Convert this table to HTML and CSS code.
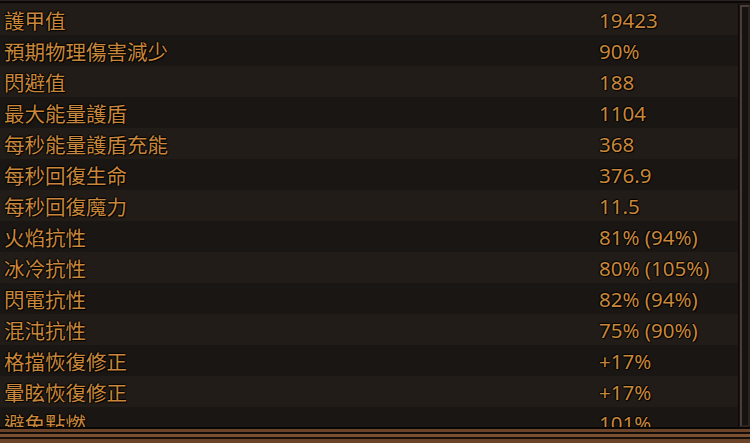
FILE: index.html
```html
<!DOCTYPE html>
<html lang="zh-Hant">
<head>
  <meta charset="UTF-8">
  <title>角色屬性</title>
  <link rel="stylesheet" href="styles.css">
</head>
<body>
  <div class="panel">
    <div class="top-edge"></div>
    <div class="body">
      <div class="stats">
        <div class="row"><span class="label">護甲值</span><span class="value">19423</span></div>
        <div class="row"><span class="label">預期物理傷害減少</span><span class="value">90%</span></div>
        <div class="row"><span class="label">閃避值</span><span class="value">188</span></div>
        <div class="row"><span class="label">最大能量護盾</span><span class="value">1104</span></div>
        <div class="row"><span class="label">每秒能量護盾充能</span><span class="value">368</span></div>
        <div class="row"><span class="label">每秒回復生命</span><span class="value">376.9</span></div>
        <div class="row"><span class="label">每秒回復魔力</span><span class="value">11.5</span></div>
        <div class="row"><span class="label">火焰抗性</span><span class="value">81% (94%)</span></div>
        <div class="row"><span class="label">冰冷抗性</span><span class="value">80% (105%)</span></div>
        <div class="row"><span class="label">閃電抗性</span><span class="value">82% (94%)</span></div>
        <div class="row"><span class="label">混沌抗性</span><span class="value">75% (90%)</span></div>
        <div class="row"><span class="label">格擋恢復修正</span><span class="value">+17%</span></div>
        <div class="row"><span class="label">暈眩恢復修正</span><span class="value">+17%</span></div>
        <div class="row"><span class="label">避免點燃</span><span class="value">101%</span></div>
      </div>
      <div class="scrollbar"><div class="thumb"></div></div>
    </div>
    <div class="bottom-edge"></div>
  </div>
</body>
</html>
```

FILE: styles.css
```css
body {
  margin: 0;
  background: #1c1714;
  font-family: "Noto Sans", "Noto Sans CJK TC", sans-serif;
}

.panel {
  width: 750px;
  height: 443px;
  display: flex;
  flex-direction: column;
  overflow: hidden;
}

.top-edge {
  height: 4px;
  background: linear-gradient(#2a2320 0, #2a2320 1px, #0b0908 1px, #0b0908 3px, #1d1815 3px);
}

.body {
  flex: 1;
  display: flex;
  min-height: 0;
}

.stats {
  flex: 1;
  overflow: hidden;
}

.row {
  height: 31px;
  display: flex;
  align-items: center;
  font-size: 20.5px;
  color: #c8873a;
  text-shadow: 1px 1px 1px #000, -1px 0 1px #000, 0 -1px 1px #000;
}

.row:nth-child(odd) {
  background: #221c18;
}

.row:nth-child(even) {
  background: #1a1613;
}

.label {
  width: 595px;
  padding-left: 4px;
  white-space: nowrap;
}

.value {
  white-space: nowrap;
}

.scrollbar {
  width: 11px;
  background: #1a1512;
  border-left: 1px solid #0c0a09;
  display: flex;
}

.thumb {
  flex: 1;
  margin: 1px 0 0 1px;
  border: 2px solid #4a3c38;
  border-right-color: #2c2320;
  border-bottom-color: #2c2320;
  background: #161210;
}

.bottom-edge {
  height: 16px;
  background: linear-gradient(#0a0807 0, #0a0807 2px, #6a4328 2px, #6a4328 5px, #120d0a 5px, #120d0a 7px, #7a5030 7px, #7a5030 10px, #140f0b 10px, #140f0b 12px, #6a4328 12px);
}
```
